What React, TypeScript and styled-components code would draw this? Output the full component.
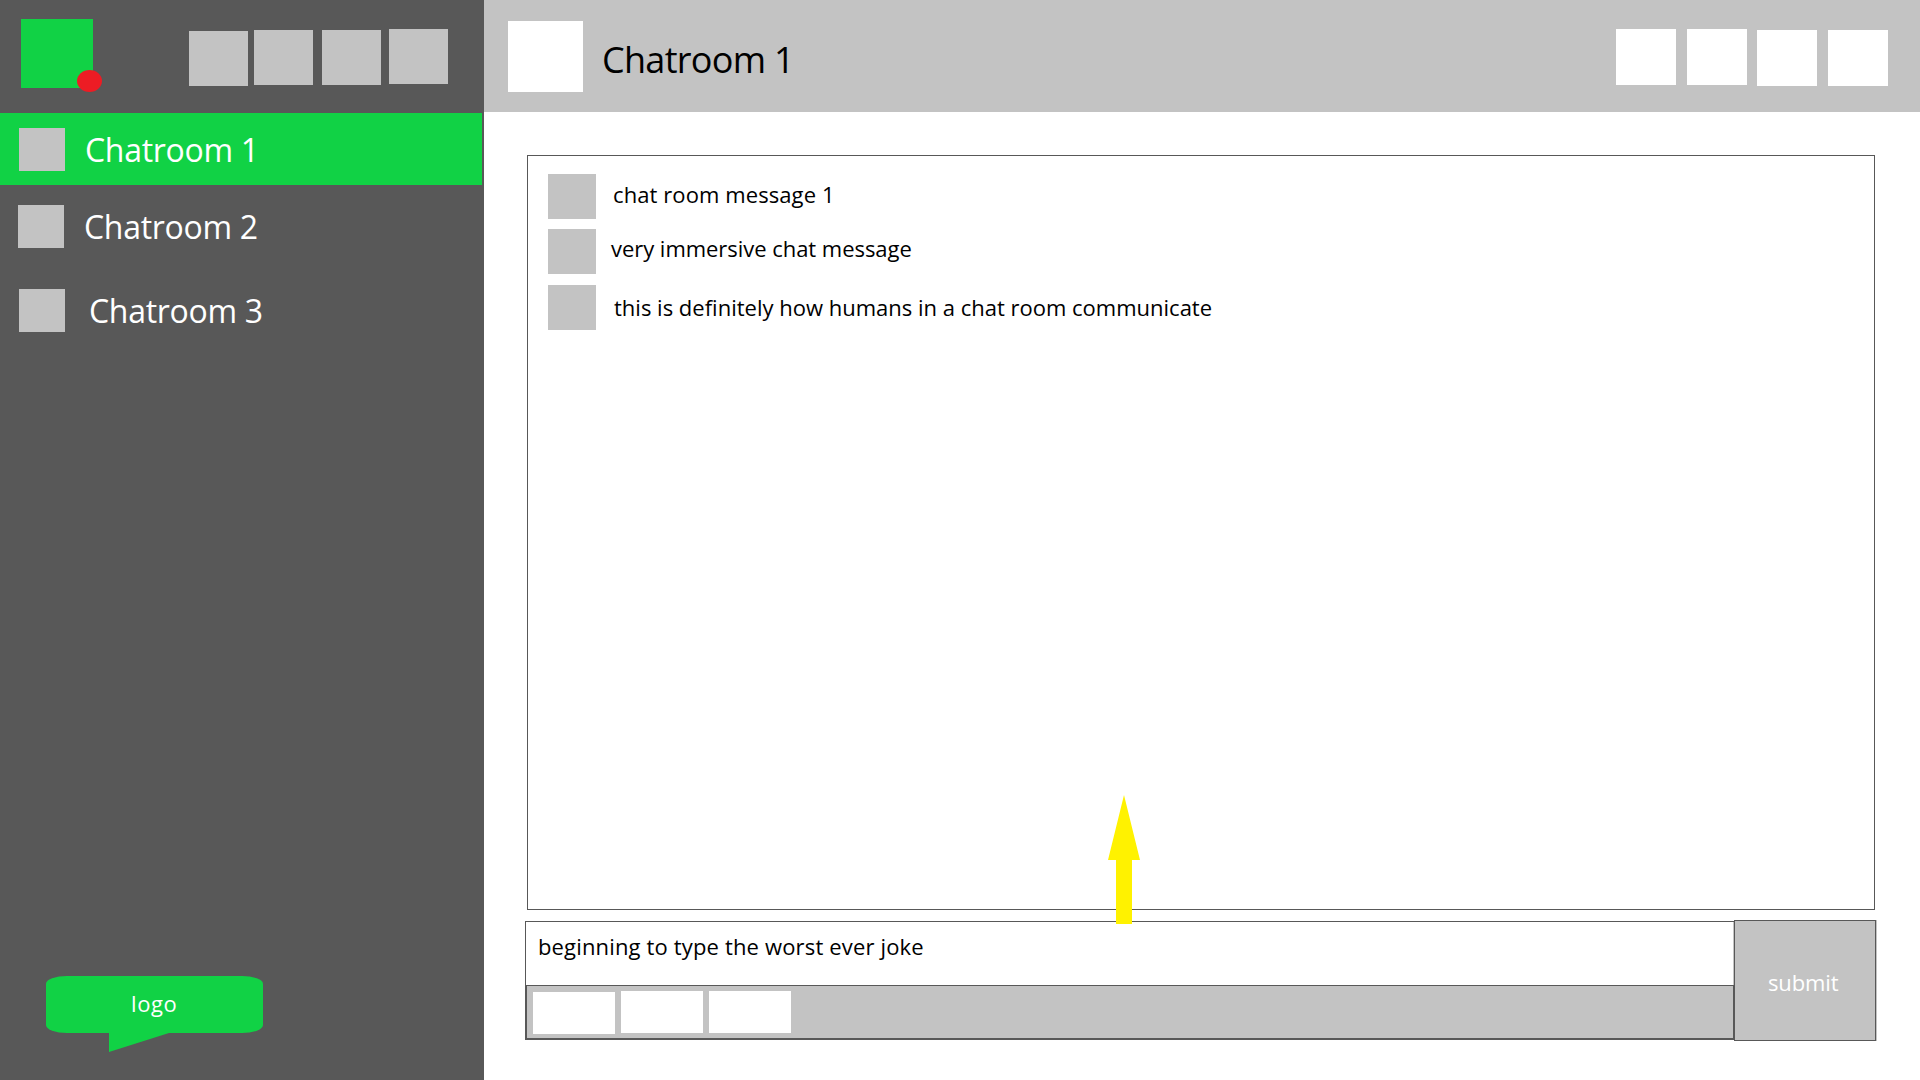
import React from 'react';
import styled, { createGlobalStyle } from 'styled-components';

const color = {
  dark: '#585858',
  grey: '#c3c3c3',
  green: '#11d245',
  red: '#ed1c24',
  yellow: '#fff200',
};

const GlobalStyle = createGlobalStyle`
  *, *::before, *::after { box-sizing: border-box; }
  body {
    margin: 0;
    background: #fff;
    font-family: 'Open Sans', 'Noto Sans', sans-serif;
    overflow: hidden;
  }
`;

const Page = styled.div`
  display: flex;
  width: 1920px;
  height: 1080px;
  background: #fff;
`;

const Sidebar = styled.aside`
  display: flex;
  flex-direction: column;
  width: 484px;
  height: 100%;
  flex: none;
  background: ${color.dark};
`;

const ProfileBar = styled.div`
  display: flex;
  align-items: flex-start;
  justify-content: space-between;
  height: 113px;
  padding: 19px 36px 0 21px;
`;

const Avatar = styled.div`
  position: relative;
  width: 72px;
  height: 69px;
  background: ${color.green};
`;

const StatusDot = styled.span`
  position: absolute;
  left: 56px;
  top: 51px;
  width: 25px;
  height: 22px;
  border-radius: 50%;
  background: ${color.red};
`;

const SidebarActions = styled.div`
  display: flex;
  padding-top: 10px;
`;

const SidebarAction = styled.button<{ $drop: number; $gap: number }>`
  width: 59px;
  height: 55px;
  margin: ${(p) => p.$drop}px 0 0 ${(p) => p.$gap}px;
  padding: 0;
  border: 0;
  background: ${color.grey};
`;

const RoomList = styled.nav`
  display: flex;
  flex-direction: column;
  align-items: flex-start;
`;

const Room = styled.a<{ $active?: boolean; $height: number; $indent: number; $top: number; $gap: number }>`
  display: flex;
  align-items: flex-start;
  gap: ${(p) => p.$gap}px;
  width: 482px;
  height: ${(p) => p.$height}px;
  padding: ${(p) => p.$top}px 0 0 ${(p) => p.$indent}px;
  background: ${(p) => (p.$active ? color.green : 'transparent')};
  color: #fff;
`;

const RoomIcon = styled.span`
  width: 46px;
  height: 43px;
  background: ${color.grey};
`;

const RoomName = styled.span`
  font-size: 32px;
  line-height: 43px;
  letter-spacing: -0.3px;
  white-space: nowrap;
`;

const Logo = styled.div`
  position: relative;
  width: 217px;
  height: 57px;
  margin: auto 0 47px 46px;
  padding: 12px 0 0 85px;
  border-radius: 21px / 8px;
  background: ${color.green};
  color: #fff;
  font-size: 22px;
  line-height: 30px;
  letter-spacing: 0.6px;

  &::after {
    content: '';
    position: absolute;
    left: 63px;
    top: 57px;
    width: 60px;
    height: 19px;
    background: ${color.green};
    clip-path: polygon(0 0, 100% 0, 0 100%);
  }
`;

const Main = styled.main`
  position: relative;
  display: flex;
  flex-direction: column;
  flex: 1;
`;

const Header = styled.header`
  display: flex;
  align-items: flex-start;
  height: 112px;
  padding: 21px 32px 0 24px;
  background: ${color.grey};
`;

const RoomPicture = styled.div`
  width: 75px;
  height: 71px;
  background: #fff;
`;

const Title = styled.h1`
  margin: 14px auto 0 19px;
  color: #000;
  font-size: 36px;
  font-weight: 400;
  line-height: 49px;
  letter-spacing: -0.7px;
`;

const HeaderActions = styled.div`
  display: flex;
  padding-top: 8px;
`;

const HeaderAction = styled.button<{ $drop: number; $gap: number }>`
  width: 60px;
  height: 56px;
  margin: ${(p) => p.$drop}px 0 0 ${(p) => p.$gap}px;
  padding: 0;
  border: 0;
  background: #fff;
`;

const Messages = styled.section`
  display: flex;
  flex-direction: column;
  width: 1348px;
  height: 755px;
  margin: 43px 0 0 43px;
  padding: 18px 20px;
  border: 1px solid ${color.dark};
`;

const Message = styled.article<{ $after: number; $indent: number; $drop: number; $spacing: number }>`
  display: flex;
  align-items: flex-start;
  height: 45px;
  margin-bottom: ${(p) => p.$after}px;

  p {
    margin: ${(p) => p.$drop}px 0 0 ${(p) => p.$indent}px;
    color: #000;
    font-size: 22px;
    line-height: 30px;
    letter-spacing: ${(p) => p.$spacing}px;
    white-space: nowrap;
  }
`;

const MessageIcon = styled.span`
  width: 48px;
  height: 45px;
  background: ${color.grey};
`;

const Composer = styled.form`
  display: flex;
  align-items: flex-start;
  margin: 10px 0 0 41px;
`;

const Editor = styled.div`
  display: flex;
  flex-direction: column;
  width: 1209px;
  height: 119px;
  margin-top: 1px;
`;

const Draft = styled.div`
  height: 64px;
  padding: 9px 0 0 12px;
  border: solid ${color.dark};
  border-width: 1px 0 0 1px;
  box-shadow: inset -1px 0 ${color.grey};
  color: #000;
  font-size: 22px;
  line-height: 30px;
  letter-spacing: 0.155px;
`;

const Toolbar = styled.div`
  display: flex;
  gap: 6px;
  height: 55px;
  padding: 5px 0 0 6px;
  border: solid ${color.dark};
  border-width: 1px 1px 2px 2px;
  background: ${color.grey};
`;

const Tool = styled.button<{ $drop?: number }>`
  width: 82px;
  height: 42px;
  margin: ${(p) => p.$drop ?? 0}px 0 0;
  padding: 0;
  border: 0;
  background: #fff;
`;

const Submit = styled.button`
  display: flex;
  align-items: flex-start;
  width: 142px;
  height: 121px;
  padding: 46px 0 0 33px;
  border: 1px solid ${color.dark};
  border-radius: 0;
  background: ${color.grey};
  box-shadow: 1px 0 0 ${color.grey};
  color: #fff;
  font-family: inherit;
  font-size: 22px;
  line-height: 30px;
  letter-spacing: -0.13px;
`;

const Arrow = styled.svg`
  position: absolute;
  left: 624px;
  top: 795px;
  width: 32px;
  height: 129px;
`;

const rooms = [
  { name: 'Chatroom 1', active: true, height: 72, indent: 19, top: 15, gap: 20 },
  { name: 'Chatroom 2', height: 84, indent: 18, top: 20, gap: 20 },
  { name: 'Chatroom 3', height: 84, indent: 19, top: 20, gap: 24 },
];

const messages = [
  { text: 'chat room message 1', after: 10, indent: 17, drop: 5, spacing: 0.09 },
  { text: 'very immersive chat message', after: 11, indent: 15, drop: 4, spacing: -0.04 },
  { text: 'this is definitely how humans in a chat room communicate', after: 0, indent: 18, drop: 7, spacing: 0.002 },
];

const sidebarActions = [
  { drop: 2, gap: 0 },
  { drop: 1, gap: 6 },
  { drop: 1, gap: 9 },
  { drop: 0, gap: 8 },
];

const headerActions = [
  { drop: 0, gap: 0 },
  { drop: 0, gap: 11 },
  { drop: 1, gap: 10 },
  { drop: 1, gap: 11 },
];

export default function App() {
  return (
    <>
      <GlobalStyle />
      <Page>
        <Sidebar>
          <ProfileBar>
            <Avatar>
              <StatusDot />
            </Avatar>
            <SidebarActions>
              {sidebarActions.map((a, i) => (
                <SidebarAction key={i} type="button" $drop={a.drop} $gap={a.gap} />
              ))}
            </SidebarActions>
          </ProfileBar>
          <RoomList>
            {rooms.map((r) => (
              <Room key={r.name} $active={r.active} $height={r.height} $indent={r.indent} $top={r.top} $gap={r.gap}>
                <RoomIcon />
                <RoomName>{r.name}</RoomName>
              </Room>
            ))}
          </RoomList>
          <Logo>logo</Logo>
        </Sidebar>
        <Main>
          <Header>
            <RoomPicture />
            <Title>Chatroom 1</Title>
            <HeaderActions>
              {headerActions.map((a, i) => (
                <HeaderAction key={i} type="button" $drop={a.drop} $gap={a.gap} />
              ))}
            </HeaderActions>
          </Header>
          <Messages>
            {messages.map((m) => (
              <Message key={m.text} $after={m.after} $indent={m.indent} $drop={m.drop} $spacing={m.spacing}>
                <MessageIcon />
                <p>{m.text}</p>
              </Message>
            ))}
          </Messages>
          <Composer>
            <Editor>
              <Draft>beginning to type the worst ever joke</Draft>
              <Toolbar>
                <Tool type="button" $drop={1} />
                <Tool type="button" />
                <Tool type="button" />
              </Toolbar>
            </Editor>
            <Submit type="button">submit</Submit>
          </Composer>
          <Arrow viewBox="0 0 32 129">
            <path d="M16 0 L32 65 H24 V129 H8 V65 H0 Z" fill={color.yellow} />
          </Arrow>
        </Main>
      </Page>
    </>
  );
}
